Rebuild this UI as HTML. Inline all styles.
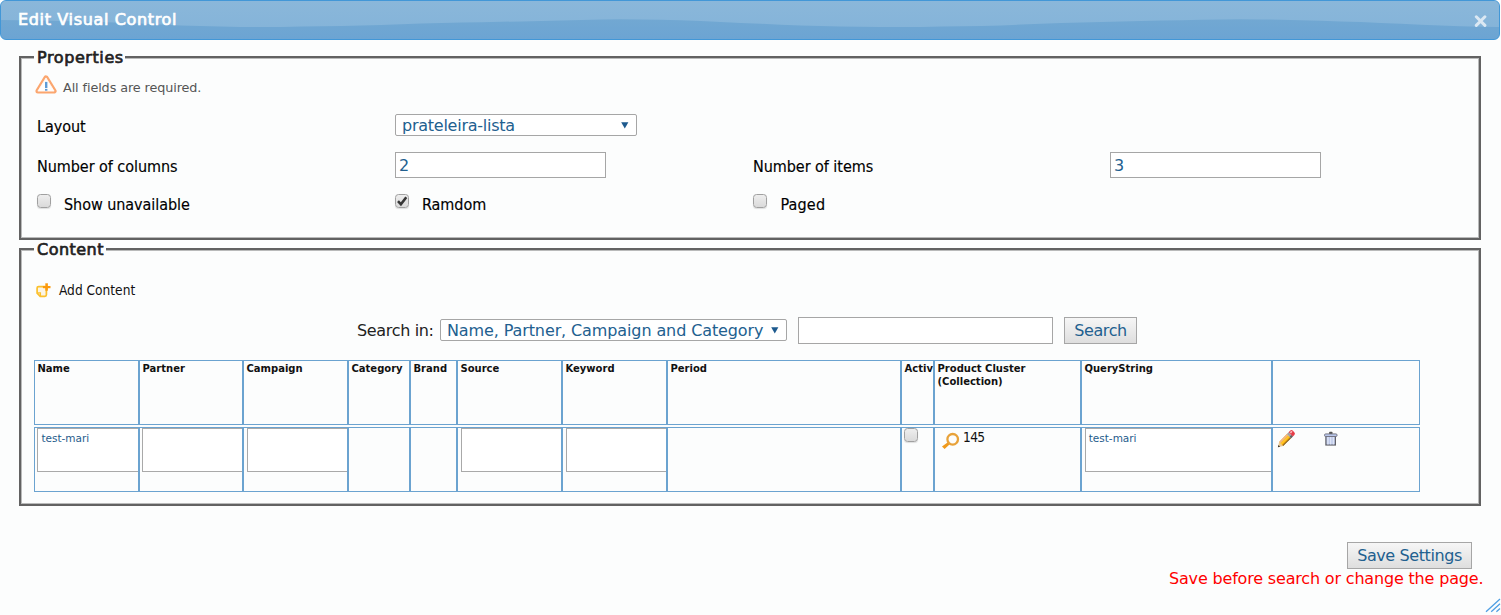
<!DOCTYPE html>
<html><head><meta charset="utf-8"><title>Edit Visual Control</title>
<style>
html,body{margin:0;padding:0}
body{width:1501px;height:615px;overflow:hidden;background:#fcfdfd;position:relative;
 font-family:"DejaVu Sans Condensed","DejaVu Sans","Liberation Sans",sans-serif;color:#222;font-size:16px}
.abs{position:absolute;white-space:nowrap}
.hdr{position:absolute;left:0;top:0;width:1498px;height:38px;border:1px solid #4297d7;border-radius:6px;background:linear-gradient(#72a8d2 45%,#6ca4d3);overflow:hidden}
.hdr svg{position:absolute;left:0;top:0}
.title{left:18px;top:9px;font-family:"DejaVu Sans","Liberation Sans",sans-serif;font-weight:normal;-webkit-text-stroke:0.7px #fff;font-size:16px;line-height:22px;color:#fff;letter-spacing:0.65px}
fieldset{position:absolute;margin:0;padding:0;border:2px solid #626262;box-sizing:border-box;box-shadow:inset 0 0 0 1px #b9baba}
legend{font-family:"DejaVu Sans","Liberation Sans",sans-serif;font-weight:normal;-webkit-text-stroke:0.7px #222;font-size:16px;line-height:20px;padding:0 1.5px 0 3px;margin-left:13px;color:#222;letter-spacing:0.59px;background:linear-gradient(rgba(252,253,253,0) 6px,#fcfdfd 6px,#fcfdfd 14px,rgba(252,253,253,0) 14px)}
legend span{display:inline-block;transform:translateY(0.6px)}
.lbl{font-size:16px;line-height:20px;color:#000;letter-spacing:-0.05px;-webkit-text-stroke:0.15px #000}
.small{font-size:12.8px;color:#555;font-family:"DejaVu Sans","Liberation Sans",sans-serif}
.inp{position:absolute;box-sizing:border-box;border:1px solid #a6a6a6;background:#fff;color:#22608f;font-size:16px;font-family:"DejaVu Sans","Liberation Sans",sans-serif;letter-spacing:-0.3px}
.cb{position:absolute;width:12px;height:12px;border:1px solid #a0a0a0;border-radius:3.5px;background:linear-gradient(#eeeeee,#dadada);box-shadow:0 1px 1px rgba(0,0,0,.12)}
.btn{position:absolute;box-sizing:border-box;border:1px solid #a6a6a6;background:linear-gradient(#f6f6f6,#dedede);color:#22608f;font-size:16px;font-family:"DejaVu Sans","Liberation Sans",sans-serif;text-align:center;letter-spacing:-0.3px}
.luc{font-family:"DejaVu Sans","Liberation Sans",sans-serif;font-size:16px;line-height:20px;letter-spacing:-0.3px}
.cell{position:absolute;box-sizing:border-box;border:1px solid #6ba3d0;overflow:hidden}
.th{position:absolute;left:2.5px;top:1px;font-weight:bold;font-size:10px;line-height:13px;color:#111;font-family:"DejaVu Sans","Liberation Sans",sans-serif;white-space:nowrap}
.ta{position:absolute;left:2px;top:0;right:0;height:44px;box-sizing:border-box;border:1px solid #a9a9a9;border-right:0;background:#fff;font-family:"DejaVu Sans","Liberation Sans",sans-serif;font-size:10.5px;line-height:14px;color:#1f5c8c;padding:2px 0 0 3.4px;letter-spacing:0}
.n145{left:28px;top:1px;font-size:13.6px;line-height:16px;color:#111;letter-spacing:-0.6px}
</style></head><body>

<div class="hdr">
<svg width="1500" height="40" viewBox="0 0 1500 40"><defs><linearGradient id="gt" x1="0" y1="0" x2="0" y2="1"><stop offset="0" stop-color="#8ab7da"/><stop offset="1" stop-color="#85b4d9"/></linearGradient></defs><path d="M0,0 H1500 V26.0 L1500,26.0 L1480,25.7 L1460,25.2 L1440,24.5 L1420,23.7 L1400,22.8 L1380,21.9 L1360,21.1 L1340,20.4 L1320,19.8 L1300,19.3 L1280,18.8 L1260,18.4 L1240,18.3 L1220,18.5 L1200,18.8 L1180,19.2 L1160,19.6 L1140,20.0 L1120,20.4 L1100,20.9 L1080,21.4 L1060,22.1 L1040,22.8 L1020,23.6 L1000,24.4 L980,25.0 L960,25.3 L940,25.6 L920,25.9 L900,26.0 L880,25.9 L860,25.7 L840,25.4 L820,25.0 L800,24.4 L780,23.7 L760,22.8 L740,21.9 L720,20.9 L700,20.0 L680,19.3 L660,18.7 L640,18.4 L620,18.3 L600,18.5 L580,18.9 L560,19.4 L540,19.9 L520,20.4 L500,20.8 L480,21.2 L460,21.5 L440,22.0 L420,22.6 L400,23.2 L380,23.9 L360,24.5 L340,24.9 L320,25.3 L300,25.6 L280,25.9 L260,26.0 L240,25.9 L220,25.6 L200,25.1 L180,24.4 L160,23.5 L140,22.6 L120,21.7 L100,21.0 L80,20.5 L60,20.0 L40,19.6 L20,19.2 L0,19.0 Z" fill="url(#gt)"/></svg>
</div>
<div class="abs title">Edit Visual Control</div>
<svg class="abs" style="left:1474px;top:14px" width="13" height="13" viewBox="0 0 13 13"><path d="M2.3,2.8 L10.9,11.4 M10.9,2.8 L2.3,11.4" stroke="#dbe8f3" stroke-width="3" stroke-linecap="round" fill="none"/></svg>

<fieldset style="left:19px;top:47px;width:1462px;height:193px"><legend><span>Properties</span></legend></fieldset>
<fieldset style="left:19px;top:239px;width:1462px;height:267px"><legend style="letter-spacing:.48px"><span>Content</span></legend></fieldset>

<!-- warning -->
<svg class="abs" style="left:35px;top:75px" width="22" height="20" viewBox="0 0 22 20"><path d="M11,2.9 L19.1,16.1 H2.9 Z" fill="#fba66f" stroke="#fba66f" stroke-width="5" stroke-linejoin="round"/><path d="M11,2.9 L19.1,16.1 H2.9 Z" fill="#fffdfb" stroke="#fffdfb" stroke-width="0.8" stroke-linejoin="round"/><rect x="10" y="6.9" width="2.4" height="6.1" fill="#5d9bd6"/><rect x="10" y="13.9" width="2.4" height="1.8" fill="#5d9bd6"/></svg>
<div class="abs small" style="left:63px;top:80px;line-height:16px;letter-spacing:-0.1px">All fields are required.</div>

<div class="abs lbl" style="left:37px;top:117px">Layout</div>
<div class="inp" style="left:395px;top:114px;width:242px;height:22px;line-height:22px;padding-left:6px;white-space:nowrap;border-radius:2px;letter-spacing:-0.25px">prateleira-lista<svg style="position:absolute;left:224.6px;top:7.2px" width="8" height="7" viewBox="0 0 8 7"><path d="M0.2,0.2 H7.4 L3.8,6.6 Z" fill="#1d5a8e"/></svg></div>

<div class="abs lbl" style="left:37px;top:157px">Number of columns</div>
<div class="inp" style="left:395px;top:152px;width:211px;height:26px;line-height:26px;padding-left:3px">2</div>
<div class="abs lbl" style="left:753px;top:157px">Number of items</div>
<div class="inp" style="left:1110px;top:152px;width:211px;height:26px;line-height:26px;padding-left:3px">3</div>

<div class="cb" style="left:37px;top:194px"></div>
<div class="abs lbl" style="left:64px;top:195px">Show unavailable</div>
<div class="cb" style="left:395px;top:194px"><svg width="12" height="12" viewBox="0 0 12 12" style="position:absolute;left:0;top:0"><path d="M2,6.2 L4.9,9.3 L10.3,2.3" stroke="#363636" stroke-width="2.6" fill="none"/></svg></div>
<div class="abs lbl" style="left:422px;top:195px">Ramdom</div>
<div class="cb" style="left:753px;top:194px"></div>
<div class="abs lbl" style="left:780.5px;top:195px;letter-spacing:.15px">Paged</div>

<!-- content -->
<svg class="abs" style="left:35px;top:282px" width="17" height="17" viewBox="0 0 17 17"><path d="M3.6,4.6 H9.9 Q11.4,4.6 11.4,6.1 V12.8 Q11.4,14.3 9.9,14.3 H5.2 L2.1,11.2 V6.1 Q2.1,4.6 3.6,4.6 Z" fill="#fbf5e6" stroke="#fbc02d" stroke-width="1.7" stroke-linejoin="round"/><path d="M2.4,10.9 H5.4 V14" fill="none" stroke="#fbc02d" stroke-width="1.3"/><path d="M11.6,1.3 V8.7" stroke="#fb9a0e" stroke-width="2.6"/><path d="M7.9,5.1 H15.5" stroke="#fb9a0e" stroke-width="2.2"/></svg>
<div class="abs" style="left:59px;top:280px;font-size:13.6px;line-height:20px;color:#111">Add Content</div>

<div class="abs luc" style="left:357px;top:321px;color:#222;letter-spacing:-0.34px">Search in:</div>
<div class="inp" style="left:440px;top:319px;width:347px;height:22px;line-height:22px;padding-left:6px;white-space:nowrap;border-radius:2px;letter-spacing:-0.11px">Name, Partner, Campaign and Category<svg style="position:absolute;left:330px;top:7px" width="8" height="7" viewBox="0 0 8 7"><path d="M0.2,0.2 H7.4 L3.8,6.6 Z" fill="#1d5a8e"/></svg></div>
<div class="inp" style="left:798px;top:317px;width:255px;height:27px"></div>
<div class="btn" style="left:1064px;top:317px;width:73px;height:27px;line-height:25px;letter-spacing:-0.41px">Search</div>

<!--TBL-->
<div class="cell" style="left:34px;top:360px;width:105px;height:65px"><div class="th">Name</div></div>
<div class="cell" style="left:139px;top:360px;width:104px;height:65px"><div class="th">Partner</div></div>
<div class="cell" style="left:243px;top:360px;width:105px;height:65px"><div class="th">Campaign</div></div>
<div class="cell" style="left:348px;top:360px;width:62px;height:65px"><div class="th">Category</div></div>
<div class="cell" style="left:410px;top:360px;width:47px;height:65px"><div class="th">Brand</div></div>
<div class="cell" style="left:457px;top:360px;width:105px;height:65px"><div class="th">Source</div></div>
<div class="cell" style="left:562px;top:360px;width:105px;height:65px"><div class="th">Keyword</div></div>
<div class="cell" style="left:667px;top:360px;width:234px;height:65px"><div class="th">Period</div></div>
<div class="cell" style="left:901px;top:360px;width:33px;height:65px"><div class="th">Active</div></div>
<div class="cell" style="left:934px;top:360px;width:147px;height:65px"><div class="th">Product Cluster<br>(Collection)</div></div>
<div class="cell" style="left:1081px;top:360px;width:191px;height:65px"><div class="th">QueryString</div></div>
<div class="cell" style="left:1272px;top:360px;width:148px;height:65px"><div class="th"></div></div>
<div class="cell" style="left:34px;top:427px;width:105px;height:65px"><div class="ta">test-mari</div></div>
<div class="cell" style="left:139px;top:427px;width:104px;height:65px"><div class="ta"></div></div>
<div class="cell" style="left:243px;top:427px;width:105px;height:65px"><div class="ta" style="left:3px"></div></div>
<div class="cell" style="left:348px;top:427px;width:62px;height:65px"></div>
<div class="cell" style="left:410px;top:427px;width:47px;height:65px"></div>
<div class="cell" style="left:457px;top:427px;width:105px;height:65px"><div class="ta" style="left:3px"></div></div>
<div class="cell" style="left:562px;top:427px;width:105px;height:65px"><div class="ta" style="left:3px"></div></div>
<div class="cell" style="left:667px;top:427px;width:234px;height:65px"></div>
<div class="cell" style="left:901px;top:427px;width:33px;height:65px"><div class="cb" style="left:2px;top:0px"></div></div>
<div class="cell" style="left:934px;top:427px;width:147px;height:65px"><svg class="abs" style="left:5.4px;top:2.8px" width="22" height="20" viewBox="0 0 22 20"><path d="M8.2,11.0 L10.0,13.0 L4.6,18.0 L2.0,15.6 Z" fill="#f09a1c"/><circle cx="12.7" cy="8.3" r="5.3" fill="#fdfdfc" stroke="#e8a23a" stroke-width="2.3"/></svg><div class="abs n145">145</div></div>
<div class="cell" style="left:1081px;top:427px;width:191px;height:65px"><div class="ta" style="left:3px;padding-left:2.7px">test-mari</div></div>
<div class="cell" style="left:1272px;top:427px;width:148px;height:65px"><svg class="abs" style="left:3px;top:0px" width="22" height="22" viewBox="0 0 22 22"><g transform="translate(1.9,19.2) rotate(-45)"><path d="M0,0 L4.6,-2.9 V2.9 Z" fill="#e9c994"/><path d="M0,0 L1.9,-1.2 V1.2 Z" fill="#3b3125"/><rect x="4.6" y="-2.9" width="11" height="5.8" fill="#f7a707"/><rect x="4.6" y="-2.9" width="11" height="1.8" fill="#f2b78a"/><rect x="4.6" y="-1.1" width="11" height="1.9" fill="#ffc72c"/><rect x="4.6" y="1.9" width="11" height="1" fill="#7f6236"/><rect x="15.6" y="-3" width="2.6" height="6" fill="#a3a3a3"/><rect x="15.6" y="0.9" width="2.6" height="2.1" fill="#5e5e5e"/><path d="M18.2,-3 H20.2 Q22.2,-3 22.2,-1 V1 Q22.2,3 20.2,3 H18.2 Z" fill="#e63c47"/><rect x="19" y="-2.2" width="2.2" height="1.7" fill="#f8b9bc"/></g></svg><svg class="abs" style="left:50px;top:3px" width="17" height="17" viewBox="0 0 17 17"><rect x="6.1" y="0.8" width="3.4" height="2.4" rx="0.8" fill="#555"/><rect x="2.9" y="5" width="9.5" height="9" fill="#b9c5e8" stroke="#606066" stroke-width="1.2"/><rect x="4.2" y="5.6" width="1.5" height="7.8" fill="#dde4f6"/><rect x="6.9" y="5.6" width="1.5" height="7.8" fill="#dde4f6"/><rect x="9.6" y="5.6" width="1.5" height="7.8" fill="#dde4f6"/><rect x="1.5" y="2.9" width="12.6" height="2.6" rx="1.2" fill="#b9c6ea" stroke="#6e6e7c" stroke-width="0.9"/></svg></div>
<!--/TBL-->

<div class="btn" style="left:1347px;top:542px;width:125px;height:27px;line-height:26px;letter-spacing:-0.41px">Save Settings</div>
<div class="abs luc" style="left:1169px;top:569px;color:#f00;letter-spacing:-0.175px">Save before search or change the page.</div>
<svg class="abs" style="left:1485px;top:598px" width="16" height="15" viewBox="0 0 16 15"><path d="M1,13.8 L15,0.9 M6.2,13.8 L15,5.8 M11.4,13.8 L15,10.6" stroke="#4f9fe3" stroke-width="1.3" fill="none"/></svg>
</body></html>
